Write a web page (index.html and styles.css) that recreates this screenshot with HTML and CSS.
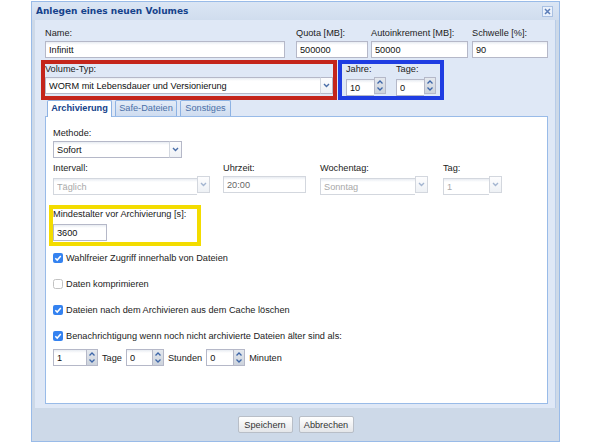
FILE: index.html
```html
<!DOCTYPE html>
<html lang="de">
<head>
  <meta charset="UTF-8">
  <title>Anlegen eines neuen Volumes</title>
  <link rel="stylesheet" href="styles.css">
</head>
<body>
  <div class="win">
    <div class="win-head">
      <span class="win-title">Anlegen eines neuen Volumes</span>
      <span class="win-close">
        <svg width="7" height="7" viewBox="0 0 7 7"><path d="M1 1L6 6M6 1L1 6" stroke="#5b7db8" stroke-width="1.5"/></svg>
      </span>
    </div>

    <div class="win-body">
      <div class="top-row">
        <div class="fld f-name">
          <label>Name:</label>
          <input class="txt spell" type="text" value="Infinitt">
        </div>
        <div class="fld f-quota">
          <label>Quota [MB]:</label>
          <input class="txt" type="text" value="500000">
        </div>
        <div class="fld f-auto">
          <label>Autoinkrement [MB]:</label>
          <input class="txt" type="text" value="50000">
        </div>
        <div class="fld f-thr">
          <label>Schwelle [%]:</label>
          <input class="txt" type="text" value="90">
        </div>
      </div>

      <div class="type-row">
        <div class="mark mark-red">
          <label>Volume-Typ:</label>
          <div class="combo">
            <input class="txt" type="text" value="WORM mit Lebensdauer und Versionierung">
            <span class="trig"><svg width="7" height="5" viewBox="0 0 7 5"><path d="M1 1L3.5 3.5L6 1" fill="none" stroke="#4a6ea8" stroke-width="1.4"/></svg></span>
          </div>
        </div>
        <div class="mark mark-blue">
          <div class="fld f-spin">
            <label>Jahre:</label>
            <div class="spin">
              <input class="txt" type="text" value="10">
              <span class="spin-btn"><svg width="8" height="13" viewBox="0 0 8 13"><path d="M1.5 4.5L4 2L6.5 4.5M1.5 8.5L4 11L6.5 8.5" fill="none" stroke="#3d66a8" stroke-width="1.3"/></svg></span>
            </div>
          </div>
          <div class="fld f-spin">
            <label>Tage:</label>
            <div class="spin">
              <input class="txt" type="text" value="0">
              <span class="spin-btn"><svg width="8" height="13" viewBox="0 0 8 13"><path d="M1.5 4.5L4 2L6.5 4.5M1.5 8.5L4 11L6.5 8.5" fill="none" stroke="#3d66a8" stroke-width="1.3"/></svg></span>
            </div>
          </div>
        </div>
      </div>

      <div class="tabs">
        <span class="tab active t1">Archivierung</span>
        <span class="tab t2">Safe-Dateien</span>
        <span class="tab t3">Sonstiges</span>
      </div>

      <div class="tab-body">
        <label>Methode:</label>
        <div class="combo c-method">
          <input class="txt" type="text" value="Sofort">
          <span class="trig"><svg width="7" height="5" viewBox="0 0 7 5"><path d="M1 1L3.5 3.5L6 1" fill="none" stroke="#4a6ea8" stroke-width="1.4"/></svg></span>
        </div>

        <div class="sched-row">
          <div class="fld f-int">
            <label>Intervall:</label>
            <div class="combo off">
              <input class="txt" type="text" value="Täglich">
              <span class="trig"><svg width="7" height="5" viewBox="0 0 7 5"><path d="M1 1L3.5 3.5L6 1" fill="none" stroke="#a3b5d0" stroke-width="1.4"/></svg></span>
            </div>
          </div>
          <div class="fld f-time">
            <label>Uhrzeit:</label>
            <input class="txt dim" type="text" value="20:00">
          </div>
          <div class="fld f-week">
            <label>Wochentag:</label>
            <div class="combo off">
              <input class="txt" type="text" value="Sonntag">
              <span class="trig"><svg width="7" height="5" viewBox="0 0 7 5"><path d="M1 1L3.5 3.5L6 1" fill="none" stroke="#a3b5d0" stroke-width="1.4"/></svg></span>
            </div>
          </div>
          <div class="fld f-day">
            <label>Tag:</label>
            <div class="combo off">
              <input class="txt" type="text" value="1">
              <span class="trig"><svg width="7" height="5" viewBox="0 0 7 5"><path d="M1 1L3.5 3.5L6 1" fill="none" stroke="#a3b5d0" stroke-width="1.4"/></svg></span>
            </div>
          </div>
        </div>

        <div class="mark mark-yellow">
          <label>Mindestalter vor Archivierung [s]:</label>
          <input class="txt age" type="text" value="3600">
        </div>

        <div class="chk first">
          <span class="box on"><svg width="10" height="10" viewBox="0 0 10 10"><rect x="0" y="0" width="10" height="10" rx="2" fill="#3482f0"/><path d="M2.3 5.2L4.2 7.1L7.8 2.9" fill="none" stroke="#fff" stroke-width="1.5"/></svg></span>
          Wahlfreier Zugriff innerhalb von Dateien
        </div>
        <div class="chk">
          <span class="box"><svg width="10" height="10" viewBox="0 0 10 10"><rect x="0.5" y="0.5" width="9" height="9" rx="2" fill="#fff" stroke="#c2c2c2"/></svg></span>
          Daten komprimieren
        </div>
        <div class="chk">
          <span class="box on"><svg width="10" height="10" viewBox="0 0 10 10"><rect x="0" y="0" width="10" height="10" rx="2" fill="#3482f0"/><path d="M2.3 5.2L4.2 7.1L7.8 2.9" fill="none" stroke="#fff" stroke-width="1.5"/></svg></span>
          Dateien nach dem Archivieren aus dem Cache löschen
        </div>
        <div class="chk">
          <span class="box on"><svg width="10" height="10" viewBox="0 0 10 10"><rect x="0" y="0" width="10" height="10" rx="2" fill="#3482f0"/><path d="M2.3 5.2L4.2 7.1L7.8 2.9" fill="none" stroke="#fff" stroke-width="1.5"/></svg></span>
          Benachrichtigung wenn noch nicht archivierte Dateien älter sind als:
        </div>

        <div class="age-row">
          <div class="spin s-days">
            <input class="txt" type="text" value="1">
            <span class="spin-btn"><svg width="8" height="13" viewBox="0 0 8 13"><path d="M1.5 4.5L4 2L6.5 4.5M1.5 8.5L4 11L6.5 8.5" fill="none" stroke="#3d66a8" stroke-width="1.3"/></svg></span>
          </div>
          <span class="unit">Tage</span>
          <div class="spin s-hours">
            <input class="txt" type="text" value="0">
            <span class="spin-btn"><svg width="8" height="13" viewBox="0 0 8 13"><path d="M1.5 4.5L4 2L6.5 4.5M1.5 8.5L4 11L6.5 8.5" fill="none" stroke="#3d66a8" stroke-width="1.3"/></svg></span>
          </div>
          <span class="unit">Stunden</span>
          <div class="spin s-mins">
            <input class="txt" type="text" value="0">
            <span class="spin-btn"><svg width="8" height="13" viewBox="0 0 8 13"><path d="M1.5 4.5L4 2L6.5 4.5M1.5 8.5L4 11L6.5 8.5" fill="none" stroke="#3d66a8" stroke-width="1.3"/></svg></span>
          </div>
          <span class="unit">Minuten</span>
        </div>
      </div>
    </div>

    <div class="win-foot">
      <button>Speichern</button>
      <button>Abbrechen</button>
    </div>
  </div>
</body>
</html>
```

FILE: styles.css
```css
* {
  box-sizing: border-box;
}

body {
  margin: 0;
  background: #fff;
  font-family: 'Liberation Sans', Arial, sans-serif;
  font-size: 9.2px;
  color: #222;
}

/* Fenster */
.win {
  margin: 1px 0 0 31px;
  width: 529px;
  height: 441px;
  border: 1px solid #99bbe8;
  background: #cdd9e8;
  display: flex;
  flex-direction: column;
}

.win-head {
  height: 18px;
  flex: none;
  display: flex;
  align-items: center;
  justify-content: space-between;
  padding: 0 6px 0 4px;
  background: linear-gradient(#dbe6f4, #d0ddee);
}

.win-title {
  font-family: 'DejaVu Sans', sans-serif;
  font-weight: bold;
  font-size: 9px;
  color: #15428b;
}

.win-close {
  width: 11px;
  height: 11px;
  border: 1px solid #a9c0e2;
  background: #eaf1fb;
  display: flex;
  align-items: center;
  justify-content: center;
}

.win-body {
  flex: 1;
  margin: 0 3px;
  background: #dfe8f6;
  border-right: 1px solid #b8cce8;
  padding: 8px 7px 4px 10px;
  display: flex;
  flex-direction: column;
}

.win-foot {
  height: 33px;
  flex: none;
  display: flex;
  justify-content: center;
  gap: 6px;
  padding-top: 8px;
}

button {
  width: 55px;
  height: 17px;
  border: 1px solid #b8bec7;
  border-radius: 2px;
  background: linear-gradient(#ffffff, #e4e6e9);
  font-family: inherit;
  font-size: 9.2px;
  color: #333;
  padding: 0;
}

/* Felder */
label {
  display: block;
  height: 11px;
  line-height: 11px;
  white-space: nowrap;
}

.txt {
  display: block;
  width: 100%;
  min-width: 0;
  height: 17px;
  margin: 0;
  border: 1px solid #b5b8c8;
  background: #fff linear-gradient(#e8ecf2, #fff 3px);
  padding: 0 3px;
  font-family: inherit;
  font-size: 9.2px;
  color: #111;
  outline: none;
}

.fld .txt,
.fld .combo,
.fld .spin {
  margin-top: 2px;
}

.spell {
  text-decoration: underline dotted #e07a7a;
  text-underline-offset: 2px;
}

.combo,
.spin {
  display: flex;
}

.combo .txt,
.spin .txt {
  flex: 1 1 0;
  width: 0;
  border-right: none;
}

.trig {
  width: 13px;
  height: 17px;
  flex: none;
  border: 1px solid #b5b8c8;
  border-left: 1px solid #d3d8e0;
  background: linear-gradient(#fdfdfe, #eef1f5);
  display: flex;
  align-items: center;
  justify-content: center;
}

.combo.off .txt {
  color: #a8a8a8;
  border-color: #d3d7de;
}

.combo.off .trig {
  border-color: #d3d7de;
}

.dim {
  color: #666;
  border-color: #d3d7de;
}

.spin-btn {
  width: 12px;
  height: 17px;
  flex: none;
  border: 1px solid #b5b8c8;
  background: linear-gradient(#e4e8ee, #cdd3dc);
  display: flex;
  align-items: center;
  justify-content: center;
}

/* obere Zeile */
.top-row {
  display: flex;
}

.f-name { width: 240px; margin-right: 11px; }
.f-quota { width: 72px; margin-right: 3px; }
.f-auto { width: 97px; margin-right: 4px; }
.f-thr { width: 76px; }

/* Markierungen */
.type-row {
  display: flex;
  margin-top: 2px;
  height: 40px;
}

.mark {
  border: 4px solid;
}

.mark-red {
  border-color: #c4251b;
  margin-left: -4px;
  width: 296px;
}

.mark-red .combo {
  margin-top: 2px;
}

.mark-blue {
  border-color: #1f3de2;
  margin-left: 1px;
  width: 106px;
  padding-left: 4px;
  display: flex;
  gap: 10px;
}

.f-spin {
  width: 40px;
  flex: none;
}

.mark-yellow {
  border-color: #f3dc00;
  margin: 10px 0 0 -4px;
  width: 152px;
  padding-bottom: 1px;
}

.age {
  width: 54px;
  margin-top: 4px;
}

/* Reiter */
.tabs {
  display: flex;
  align-items: flex-end;
  gap: 3px;
  height: 17px;
  padding-left: 2px;
  border-bottom: 1px solid #99bbe8;
}

.tab {
  height: 16px;
  line-height: 15px;
  border: 1px solid #8db2e3;
  border-bottom: none;
  border-radius: 2px 2px 0 0;
  background: linear-gradient(#e4ecf7, #cedcf0);
  color: #4a70a8;
  text-align: center;
}

.tab.active {
  height: 17px;
  margin-bottom: -1px;
  background: #fff;
  color: #15428b;
  font-weight: bold;
}

.t1 { width: 65px; }
.t2 { width: 62px; }
.t3 { width: 51px; }

.tab-body {
  flex: 1;
  background: #fff;
  border: 1px solid #99bbe8;
  border-top: none;
  padding: 11px 7px 0 7px;
}

.c-method {
  width: 129px;
  margin-top: 2px;
}

.sched-row {
  display: flex;
  margin-top: 5px;
}

.f-int { width: 157px; margin-right: 13px; }
.f-time { width: 83px; margin-right: 14px; }
.f-week { width: 108px; margin-right: 15px; }
.f-day { width: 59px; }

/* Checkboxen */
.chk {
  display: flex;
  align-items: center;
  height: 26px;
  color: #222;
}

.chk.first {
  margin-top: -1px;
}

.box {
  width: 10px;
  height: 10px;
  margin-right: 3px;
  display: flex;
}

.age-row {
  display: flex;
  align-items: center;
  height: 17px;
}

.spin.s-days { width: 45px; flex: none; }
.spin.s-hours { width: 38px; flex: none; }
.spin.s-mins { width: 39px; flex: none; }

.unit {
  margin: 0 4px 0 4px;
}
```
